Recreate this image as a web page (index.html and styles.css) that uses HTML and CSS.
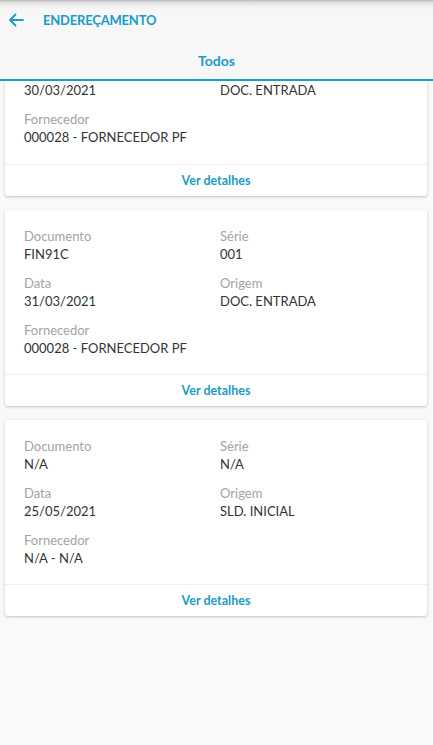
FILE: index.html
```html
<!DOCTYPE html>
<html lang="pt">
<head>
<meta charset="utf-8">
<link rel="stylesheet" href="styles.css">
</head>
<body>
<header class="appbar">
  <div class="toolbar">
    <svg class="back" width="16" height="14" viewBox="0 0 16 14"><path d="M15 7H2M7.5 1.5L2 7l5.5 5.5" fill="none" stroke="#1a9bc8" stroke-width="1.8" stroke-linecap="round" stroke-linejoin="round"/></svg>
    <span class="title">ENDEREÇAMENTO</span>
  </div>
  <div class="tabs"><span class="tab">Todos</span></div>
</header>
<main class="list">
  <section class="card partial">
    <div class="fields">
      <div class="field"><div class="value">30/03/2021</div></div>
      <div class="field"><div class="value">DOC. ENTRADA</div></div>
      <div class="field wide"><div class="label">Fornecedor</div><div class="value">000028 - FORNECEDOR PF</div></div>
    </div>
    <div class="action">Ver detalhes</div>
  </section>
  <section class="card">
    <div class="fields">
      <div class="field"><div class="label">Documento</div><div class="value">FIN91C</div></div>
      <div class="field"><div class="label">Série</div><div class="value">001</div></div>
      <div class="field"><div class="label">Data</div><div class="value">31/03/2021</div></div>
      <div class="field"><div class="label">Origem</div><div class="value">DOC. ENTRADA</div></div>
      <div class="field wide"><div class="label">Fornecedor</div><div class="value">000028 - FORNECEDOR PF</div></div>
    </div>
    <div class="action">Ver detalhes</div>
  </section>
  <section class="card">
    <div class="fields">
      <div class="field"><div class="label">Documento</div><div class="value">N/A</div></div>
      <div class="field"><div class="label">Série</div><div class="value">N/A</div></div>
      <div class="field"><div class="label">Data</div><div class="value">25/05/2021</div></div>
      <div class="field"><div class="label">Origem</div><div class="value">SLD. INICIAL</div></div>
      <div class="field wide"><div class="label">Fornecedor</div><div class="value">N/A - N/A</div></div>
    </div>
    <div class="action">Ver detalhes</div>
  </section>
</main>
</body>
</html>
```

FILE: styles.css
```css
* { box-sizing: border-box; }
html, body { margin: 0; padding: 0; }
body {
  width: 433px;
  height: 745px;
  overflow: hidden;
  background: #f9f9f9;
  font-family: Lato, "Open Sans", sans-serif;
  display: flex;
  flex-direction: column;
}
.appbar {
  position: relative;
  z-index: 2;
  flex: none;
  background: #f7f7f7;
  background-image: linear-gradient(#b9b9b9 0, #dcdcdc 2px, #f0f0f0 6px, #f7f7f7 10px);
}
.toolbar {
  height: 40px;
  display: flex;
  align-items: center;
  padding-left: 8px;
}
.back { display: block; }
.title {
  margin-left: 19px;
  color: #1a9bc8;
  font-size: 13px;
  font-weight: 700;
  letter-spacing: -0.2px;
}
.tabs {
  height: 41px;
  display: flex;
  justify-content: center;
  align-items: center;
  border-bottom: 2px solid #1a9bc8;
}
.tab {
  color: #1a9bc8;
  font-weight: 700;
  font-size: 14px;
  margin-top: 1px;
}
.list {
  flex: 1;
  display: flex;
  flex-direction: column;
  gap: 14px;
  padding: 0 6px 0 5px;
  overflow: hidden;
}
.card {
  flex: none;
  background: #fff;
  border-radius: 3px;
  box-shadow: 0 1px 3px rgba(0,0,0,0.22);
  height: 196px;
  display: flex;
  flex-direction: column;
}
.card.partial {
  height: 115px;
  border-radius: 0 0 3px 3px;
}
.fields {
  flex: 1;
  display: grid;
  grid-template-columns: 196px 1fr;
  row-gap: 10px;
  padding: 17px 19px 0 19px;
  align-content: start;
}
.partial .fields { padding-top: 0; }
.field.wide { grid-column: 1 / 3; }
.label {
  color: #a3a3a3;
  font-size: 13px;
  line-height: 18px;
}
.value {
  color: #333;
  font-size: 13px;
  line-height: 19px;
}
.action {
  height: 32px;
  border-top: 1px solid #efefef;
  display: flex;
  align-items: center;
  justify-content: center;
  color: #1a9bc8;
  font-weight: 700;
  font-size: 12.5px;
}
```
